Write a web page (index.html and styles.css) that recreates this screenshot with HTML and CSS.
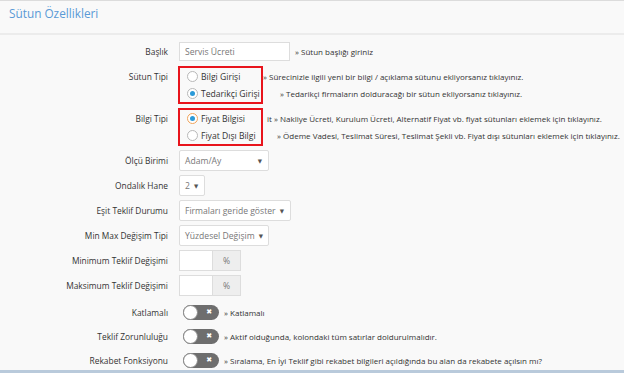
FILE: index.html
```html
<!DOCTYPE html>
<html>
<head>
  <meta charset="UTF-8">
  <title>Sütun Özellikleri</title>
  <link rel="stylesheet" href="styles.css">
</head>
<body>
  <div class="panel-head">Sütun Özellikleri</div>

  <div class="form">
    <div class="row">
      <label class="lbl">Başlık</label>
      <input class="txt txt-title" type="text" value="Servis Ücreti">
      <span class="hint">» Sütun başlığı giriniz</span>
    </div>

    <div class="row row-top">
      <label class="lbl lbl-line">Sütun Tipi</label>
      <div class="radio-box">
        <div class="radio"><span class="dot"></span>Bilgi Girişi</div>
        <div class="radio"><span class="dot on"></span>Tedarikçi Girişi</div>
      </div>
      <div class="hints">
        <div class="hint-line">» Sürecinizle ilgili yeni bir bilgi / açıklama sütunu ekliyorsanız tıklayınız.</div>
        <div class="hint-line hint-in2">» Tedarikçi firmaların dolduracağı bir sütun ekliyorsanız tıklayınız.</div>
      </div>
    </div>

    <div class="row row-top">
      <label class="lbl lbl-line">Bilgi Tipi</label>
      <div class="radio-box">
        <div class="radio"><span class="dot on focus"></span>Fiyat Bilgisi</div>
        <div class="radio"><span class="dot"></span>Fiyat Dışı Bilgi</div>
      </div>
      <div class="hints">
        <div class="hint-line hint-in3">it » Nakliye Ücreti, Kurulum Ücreti, Alternatif Fiyat vb. fiyat sütunları eklemek için tıklayınız.</div>
        <div class="hint-line hint-in4">» Ödeme Vadesi, Teslimat Süresi, Teslimat Şekli vb. Fiyat dışı sütunları eklemek için tıklayınız.</div>
      </div>
    </div>

    <div class="row">
      <label class="lbl">Ölçü Birimi</label>
      <div class="sel sel-unit">Adam/Ay<span class="caret">▼</span></div>
    </div>

    <div class="row">
      <label class="lbl">Ondalık Hane</label>
      <div class="sel sel-dec">2<span class="caret">▼</span></div>
    </div>

    <div class="row">
      <label class="lbl">Eşit Teklif Durumu</label>
      <div class="sel sel-eq">Firmaları geride göster<span class="caret">▼</span></div>
    </div>

    <div class="row">
      <label class="lbl">Min Max Değişim Tipi</label>
      <div class="sel sel-unit">Yüzdesel Değişim<span class="caret">▼</span></div>
    </div>

    <div class="row">
      <label class="lbl">Minimum Teklif Değişimi</label>
      <div class="pct"><input class="txt pct-in" type="text"><span class="addon">%</span></div>
    </div>

    <div class="row">
      <label class="lbl">Maksimum Teklif Değişimi</label>
      <div class="pct"><input class="txt pct-in" type="text"><span class="addon">%</span></div>
    </div>

    <div class="row row-sw row-sw1">
      <label class="lbl">Katlamalı</label>
      <span class="switch"><span class="knob"></span><span class="x">✖</span></span>
      <span class="hint">» Katlamalı</span>
    </div>

    <div class="row row-sw">
      <label class="lbl">Teklif Zorunluluğu</label>
      <span class="switch"><span class="knob"></span><span class="x">✖</span></span>
      <span class="hint">» Aktif olduğunda, kolondaki tüm satırlar doldurulmalıdır.</span>
    </div>

    <div class="row row-sw">
      <label class="lbl">Rekabet Fonksiyonu</label>
      <span class="switch"><span class="knob"></span><span class="x">✖</span></span>
      <span class="hint">» Sıralama, En İyi Teklif gibi rekabet bilgileri açıldığında bu alan da rekabete açılsın mı?</span>
    </div>
  </div>

  <div class="panel-foot"></div>
</body>
</html>
```

FILE: styles.css
```css
body {
  margin: 0;
  background: #f9f9f9;
  font-family: 'Open Sans', 'DejaVu Sans', sans-serif;
  font-size: 8px;
  color: #333;
  overflow: hidden;
  height: 373px;
}

.panel-head {
  border-top: 1px solid #dcdcdc;
  border-bottom: 2px solid #ececec;
  height: 32px;
  line-height: 24px;
  padding-left: 9px;
  font-size: 11.8px;
  color: #5a9ad6;
}

.form {
  display: flex;
  flex-direction: column;
  gap: 4px;
  padding-top: 6px;
}

.row {
  display: flex;
  align-items: center;
  height: 21px;
}
.row-top {
  align-items: flex-start;
  height: auto;
}

.lbl {
  width: 168px;
  padding-right: 11px;
  text-align: right;
  flex: none;
  white-space: nowrap;
  font-size: 8.4px;
}
.lbl-line {
  line-height: 17px;
  padding-top: 2px;
}

.txt {
  box-sizing: border-box;
  height: 19px;
  border: 1px solid #ddd;
  background: #fff;
  font: inherit;
  font-size: 8.6px;
  color: #777;
  padding: 0 5px;
  margin: 0;
  outline: none;
}
.txt-title {
  width: 111px;
}

.hint {
  margin-left: 5px;
  white-space: nowrap;
}

.radio-box {
  box-sizing: border-box;
  width: 85px;
  margin-left: -1px;
  border: 2px solid #e8141c;
  flex: none;
  font-size: 8.6px;
}
.radio {
  display: flex;
  align-items: center;
  height: 17px;
  padding-left: 7px;
  white-space: nowrap;
}
.dot {
  box-sizing: border-box;
  width: 11px;
  height: 11px;
  border: 1px solid #b8b8b8;
  border-radius: 50%;
  background: #fff;
  margin-right: 3px;
  position: relative;
}
.dot.on::after {
  content: "";
  position: absolute;
  left: 2px;
  top: 2px;
  width: 5px;
  height: 5px;
  border-radius: 50%;
  background: #2b9ad8;
}
.dot.focus {
  border-color: #f0a35a;
}

.hints {
  padding-top: 2px;
}
.hint-line {
  height: 17px;
  line-height: 17px;
  white-space: nowrap;
}
.hint-in2 {
  margin-left: 17px;
}
.hint-in3 {
  margin-left: 4px;
}
.hint-in4 {
  margin-left: 14px;
}

.sel {
  box-sizing: border-box;
  height: 21px;
  border: 1px solid #ddd;
  border-radius: 2px;
  background: #fff;
  color: #777;
  font-size: 8.6px;
  display: flex;
  align-items: center;
  justify-content: space-between;
  padding: 0 6px 0 5px;
  white-space: nowrap;
}
.caret {
  font-size: 5.5px;
  color: #555;
  margin-left: 4px;
}
.sel-unit {
  width: 90px;
}
.sel-dec {
  width: 26px;
}
.sel-eq {
  width: 112px;
}

.pct {
  display: flex;
  height: 21px;
}
.pct-in {
  width: 33px;
  height: 21px;
  border-right: none;
}
.addon {
  box-sizing: border-box;
  width: 29px;
  border: 1px solid #ddd;
  background: #eee;
  color: #777;
  font-size: 8.6px;
  display: flex;
  align-items: center;
  justify-content: center;
}

.row-sw {
  height: 20px;
}
.row-sw1 {
  margin-top: 2px;
}
.switch {
  box-sizing: border-box;
  width: 36px;
  height: 15px;
  margin-left: 4px;
  border-radius: 8px;
  background: #6e6e6e;
  display: flex;
  align-items: center;
  justify-content: space-between;
  padding-right: 7px;
  flex: none;
}
.knob {
  box-sizing: border-box;
  width: 15px;
  height: 15px;
  border-radius: 50%;
  background: #fff;
  border: 1px solid #8a8a8a;
}
.x {
  color: #fff;
  font-size: 7px;
  font-family: 'DejaVu Sans', sans-serif;
}

.panel-foot {
  border-top: 3px solid #b9cadb;
}
```
